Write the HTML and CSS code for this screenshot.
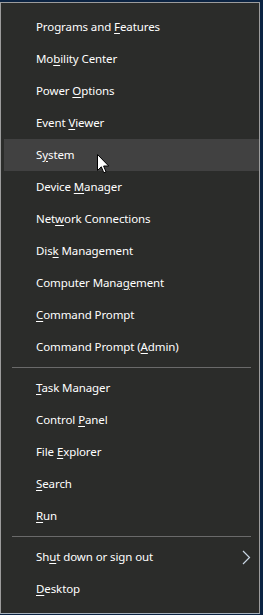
FILE: index.html
```html
<!DOCTYPE html>
<html lang="en">
<head>
    <meta charset="UTF-8">
    <title>Quick Link Menu</title>
    <link rel="stylesheet" href="styles.css">
</head>
<body>
    <!-- Win+X power user menu -->
    <div class="menu">
        <div class="item"><span>Programs and <u>F</u>eatures</span></div>
        <div class="item"><span>Mo<u>b</u>ility Center</span></div>
        <div class="item"><span>Power <u>O</u>ptions</span></div>
        <div class="item"><span>Event <u>V</u>iewer</span></div>
        <div class="item hover"><span>S<u>y</u>stem</span></div>
        <div class="item"><span>Device <u>M</u>anager</span></div>
        <div class="item"><span>Net<u>w</u>ork Connections</span></div>
        <div class="item"><span>Dis<u>k</u> Management</span></div>
        <div class="item"><span>Computer Mana<u>g</u>ement</span></div>
        <div class="item"><span><u>C</u>ommand Prompt</span></div>
        <div class="item"><span>Command Prompt (<u>A</u>dmin)</span></div>

        <div class="separator"></div>

        <div class="item"><span><u>T</u>ask Manager</span></div>
        <div class="item"><span>Control <u>P</u>anel</span></div>
        <div class="item"><span>File <u>E</u>xplorer</span></div>
        <div class="item"><span><u>S</u>earch</span></div>
        <div class="item"><span><u>R</u>un</span></div>

        <div class="separator"></div>

        <div class="item"><span>Sh<u>u</u>t down or sign out</span>
            <svg class="chevron" width="9" height="15" viewBox="0 0 9 15">
                <polyline points="1,1 7.5,7.5 1,14" fill="none" stroke="#c9d6e3" stroke-width="1.2"/>
            </svg>
        </div>
        <div class="item"><span><u>D</u>esktop</span></div>

        <!-- mouse pointer over "System" -->
        <svg class="pointer" width="13" height="21" viewBox="0 0 13 21">
            <path d="M0.5,0.5 L0.5,16.5 L4.3,12.8 L6.8,18.8 L9,17.8 L6.6,12 L11.7,12 Z" fill="#ffffff" stroke="#000000" stroke-width="1" stroke-linejoin="miter"/>
        </svg>
    </div>
</body>
</html>
```

FILE: styles.css
```css
/* Desktop behind the menu */
body, html {
    margin: 0;
    padding: 0;
    background-color: #0b2342;
    font-family: "Noto Sans", "Open Sans", sans-serif;
}

.menu {
    position: relative;
    margin-top: 2px;
    width: 258px;
    padding: 8px 0;
    background-color: #2b2c2a;
    border: 1px solid #9c9c9c;
    border-bottom-color: #a7b3c0;
}

.item {
    display: flex;
    align-items: center;
    height: 32px;
    margin-left: 3px;
    padding-left: 32px;
    padding-bottom: 2px;
    box-sizing: border-box;
    font-size: 11.5px;
    letter-spacing: -0.1px;
    color: #ffffff;
    white-space: nowrap;
}

.item u {
    text-decoration-thickness: 1px;
    text-underline-offset: 2px;
}

.item.hover {
    background-color: #414141;
}

.separator {
    height: 1px;
    margin: 4px 8px 4px 11px;
    background-color: #6a6a6a;
}

.chevron {
    margin-left: auto;
    margin-right: 8px;
    margin-top: 2px;
}

.pointer {
    position: absolute;
    left: 96px;
    top: 151px;
}
```
